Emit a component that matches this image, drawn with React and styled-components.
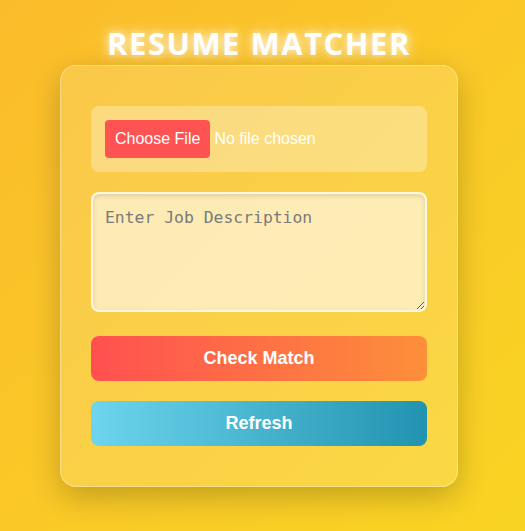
import React from "react";
import styled, { createGlobalStyle } from "styled-components";

const Global = createGlobalStyle`
  html, body { margin: 0; padding: 0; }
  body {
    min-height: 100vh;
    background: linear-gradient(135deg, #fbbc2b 0%, #f9d423 100%);
    font-family: "Liberation Sans", Arial, sans-serif;
  }
`;

const Page = styled.div`
  display: flex;
  flex-direction: column;
  align-items: center;
  padding: 26px 7px 40px 0;
  box-sizing: border-box;
`;

const Title = styled.h1`
  margin: 0 0 4px;
  font-family: "Open Sans", sans-serif;
  font-weight: 700;
  font-size: 31px;
  letter-spacing: 1.5px;
  line-height: 35px;
  color: #ffffff;
  text-shadow: 0 0 8px rgba(255, 255, 255, 0.8), 0 0 16px rgba(255, 255, 255, 0.5);
`;

const Card = styled.div`
  width: 398px;
  box-sizing: border-box;
  padding: 40px 30px;
  border-radius: 16px;
  border: 1px solid rgba(255, 255, 255, 0.35);
  background: rgba(255, 255, 255, 0.15);
  box-shadow: 0 10px 30px rgba(0, 0, 0, 0.22);
  display: flex;
  flex-direction: column;
  gap: 20px;
`;

const FileBox = styled.div`
  padding: 14px;
  border-radius: 8px;
  background: rgba(255, 255, 255, 0.3);
  display: flex;
  align-items: center;
`;

const FileInput = styled.input`
  font-family: "Liberation Sans", Arial, sans-serif;
  font-size: 16px;
  color: #ffffff;
  &::file-selector-button {
    font-family: "Liberation Sans", Arial, sans-serif;
    font-size: 16px;
    color: #ffffff;
    background: #ff5252;
    border: none;
    border-radius: 4px;
    padding: 10px;
    margin-right: 4px;
    cursor: pointer;
  }
`;

const JobText = styled.textarea`
  display: block;
  width: 100%;
  height: 120px;
  box-sizing: border-box;
  padding: 14px 12px 12px;
  border-radius: 8px;
  border: 2px solid rgba(255, 255, 255, 0.6);
  background: rgba(255, 255, 255, 0.6);
  box-shadow: inset 0 2px 5px rgba(0, 0, 0, 0.12);
  font-family: "DejaVu Sans Mono", monospace;
  font-size: 16.4px;
  color: #333;
  outline: none;
  margin-bottom: 4px;
  &::placeholder {
    color: #7a7a7a;
  }
`;

const ActionButton = styled.button`
  width: 100%;
  padding: 12px;
  border: none;
  border-radius: 8px;
  font-family: "Liberation Sans", Arial, sans-serif;
  font-weight: 700;
  font-size: 18px;
  line-height: 21px;
  color: #ffffff;
  cursor: pointer;
  background: ${(p) =>
    p.$variant === "refresh"
      ? "linear-gradient(to right, #6dd5ed, #2193b0)"
      : "linear-gradient(to right, #ff5050, #fd8f3a)"};
`;

export default function App() {
  return (
    <>
      <Global />
      <Page>
        <Title>RESUME MATCHER</Title>
        <Card>
          <FileBox>
            <FileInput type="file" />
          </FileBox>
          <JobText placeholder="Enter Job Description" />
          <ActionButton>Check Match</ActionButton>
          <ActionButton $variant="refresh">Refresh</ActionButton>
        </Card>
      </Page>
    </>
  );
}
